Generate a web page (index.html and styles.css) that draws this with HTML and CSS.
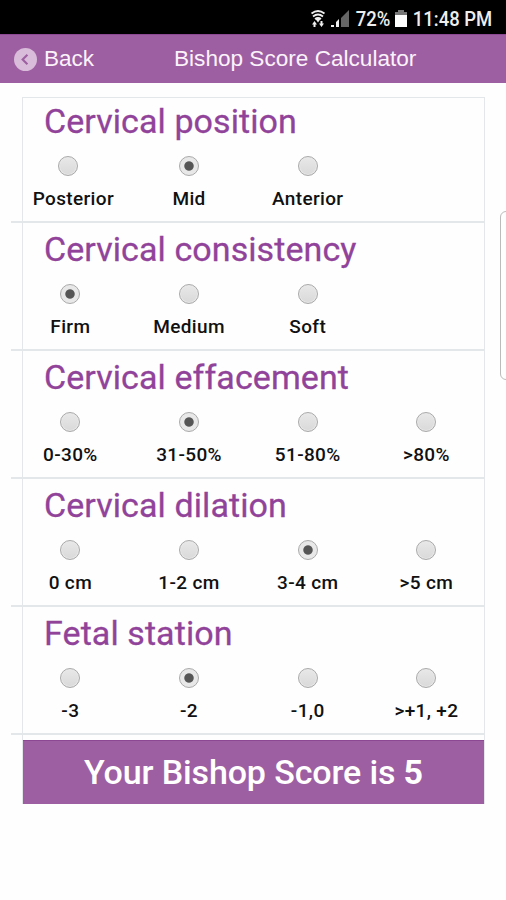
FILE: index.html
```html
<!DOCTYPE html>
<html lang="en">
<head>
    <meta charset="UTF-8">
    <meta name="viewport" content="width=device-width, initial-scale=1.0">
    <title>Bishop Score Calculator</title>
    <link rel="stylesheet" href="styles.css">
</head>
<body>
    <div class="status-bar">
        <svg class="wifi" viewBox="0 0 16 18" width="16" height="18">
            <path d="M1.500 3.500Q8 -1.500 14.500 3.500M3 6.500Q8 2.500 13 6.500M5 9Q8 7 11 9" fill="none" stroke="#eee" stroke-width="1.800"/>
            <path d="M5.500 9h5L8 12.500zM2 14.500l2.500-3.500 2.500 3.500H5.500V17h-2v-2.500zM9 13.500h1.500V11h2v2.500H14L11.500 17z" fill="#eee"/>
        </svg>
        <svg class="signal" viewBox="0 0 19 18" width="19" height="18">
            <path d="M18 0v17h-8V8z" fill="#666"/>
            <path d="M8 9v8H5v-5zM0 15h3v2H0z" fill="#eee"/>
        </svg>
        <span class="battery-level">72%</span>
        <svg class="battery" viewBox="0 0 12 17" width="12" height="17">
            <path d="M3 0h6v2h3v4H0V2h3z" fill="#777"/>
            <path d="M0 5h12v12H0z" fill="#fff"/>
        </svg>
        <span class="clock">11:48 PM</span>
    </div>

    <header class="header">
        <a class="back" href="#">
            <svg viewBox="0 0 24 24" width="23" height="23">
                <circle cx="12" cy="12" r="12" fill="#d9bcda"/>
                <path d="M14 7l-5 5 5 5" fill="none" stroke="#9e5fa2" stroke-width="2.200"/>
            </svg>
            <span>Back</span>
        </a>
        <h1>Bishop Score Calculator</h1>
    </header>

    <main class="calculator">
        <section class="question">
            <h2>Cervical position</h2>
            <div class="options">
                <label class="option posterior"><input type="radio" name="position"><span>Posterior</span></label>
                <label class="option"><input type="radio" name="position" checked><span>Mid</span></label>
                <label class="option"><input type="radio" name="position"><span>Anterior</span></label>
            </div>
        </section>
        <section class="question">
            <h2>Cervical consistency</h2>
            <div class="options">
                <label class="option"><input type="radio" name="consistency" checked><span>Firm</span></label>
                <label class="option"><input type="radio" name="consistency"><span>Medium</span></label>
                <label class="option"><input type="radio" name="consistency"><span>Soft</span></label>
            </div>
        </section>
        <section class="question">
            <h2>Cervical effacement</h2>
            <div class="options">
                <label class="option"><input type="radio" name="effacement"><span>0-30%</span></label>
                <label class="option"><input type="radio" name="effacement" checked><span>31-50%</span></label>
                <label class="option"><input type="radio" name="effacement"><span>51-80%</span></label>
                <label class="option"><input type="radio" name="effacement"><span>&gt;80%</span></label>
            </div>
        </section>
        <section class="question">
            <h2>Cervical dilation</h2>
            <div class="options">
                <label class="option"><input type="radio" name="dilation"><span>0 cm</span></label>
                <label class="option"><input type="radio" name="dilation"><span>1-2 cm</span></label>
                <label class="option"><input type="radio" name="dilation" checked><span>3-4 cm</span></label>
                <label class="option"><input type="radio" name="dilation"><span>&gt;5 cm</span></label>
            </div>
        </section>
        <section class="question">
            <h2>Fetal station</h2>
            <div class="options">
                <label class="option"><input type="radio" name="station"><span>-3</span></label>
                <label class="option"><input type="radio" name="station" checked><span>-2</span></label>
                <label class="option"><input type="radio" name="station"><span>-1,0</span></label>
                <label class="option"><input type="radio" name="station"><span>&gt;+1, +2</span></label>
            </div>
        </section>
        <div class="score">Your Bishop Score is <b>5</b></div>
    </main>

    <div class="edge-handle"></div>
</body>
</html>
```
FILE: styles.css
```css
:root {
    --purple: #9e5fa2;
    --title: #91439a;
    --line: #e3e7ea;
}

* {
    margin: 0;
    padding: 0;
    box-sizing: border-box;
}

body {
    background: #fefefe;
    color: #111;
    font-family: Roboto, sans-serif;
    height: 900px;
    position: relative;
    overflow: hidden;
}

.status-bar {
    display: flex;
    align-items: center;
    justify-content: flex-end;
    height: 34px;
    padding: 3px 14px 0 0;
    background: #000;
    color: #eee;
    font-size: 20.5px;
    font-weight: 500;
    white-space: nowrap;
}

.signal {
    margin: 0 6px 0 5px;
}

.battery {
    margin: 0 6px 0 4px;
}

/* the system font is narrower than regular Roboto */
.battery-level,
.clock {
    transform: scaleX(0.9);
    transform-origin: right;
}

.battery-level {
    margin-left: -4px;
}

.clock {
    margin-left: -9px;
}

.header {
    display: grid;
    grid-template-columns: 160px 1fr;
    align-items: center;
    height: 49px;
    padding-left: 14px;
    background: var(--purple);
    border-top: 1px solid #8d4893;
    color: #fbf3fb;
    font-family: "Liberation Sans", Arial, sans-serif;
    font-size: 22.5px;
}

.header h1 {
    font-size: 22.6px;
    font-weight: normal;
}

.back {
    display: flex;
    align-items: center;
    gap: 7px;
    color: inherit;
    text-decoration: none;
}

.calculator {
    width: 463px;
    height: 707px;
    margin: 14px 0 0 22px;
    border: 1px solid var(--line);
    border-width: 1px 1px 0;
}

.question {
    height: 128px;
    margin-left: -12px;
    padding-top: 5px;
    border-bottom: 2px solid var(--line);
}

.question:first-child {
    height: 125px;
    padding-top: 2px;
}

.question h2 {
    height: 42px;
    margin-left: 33px;
    color: var(--title);
    font-size: 34px;
    font-weight: 400;
    line-height: 42px;
    letter-spacing: 0.08px;
    white-space: nowrap;
    -webkit-text-stroke: 0.3px var(--title);
}

.options {
    display: grid;
    grid-template-columns: repeat(4, 118.7px);
    margin-top: 14px;
}

.option {
    display: flex;
    flex-direction: column;
    align-items: center;
    gap: 11px;
    font-size: 19px;
    font-weight: 500;
    line-height: 24px;
    letter-spacing: 0.35px;
    white-space: nowrap;
}

.option input {
    appearance: none;
    width: 20px;
    height: 20px;
    border: 1.5px solid #aaa;
    border-radius: 50%;
    background: linear-gradient(#e8e8e8, #d9d9d9);
    box-shadow: inset 0 0 0 1px #e8e8e8;
}

.option input:checked {
    background: radial-gradient(circle, #555 0 4.2px, #e8e8e8 5.2px);
}

.posterior input {
    margin-right: 5px;
}

.posterior span {
    margin-left: 6px;
}

.score {
    height: 64px;
    margin-top: 5px;
    background: var(--purple);
    border-top: 1px solid #8d4893;
    color: #fff;
    font-size: 34px;
    font-weight: 500;
    line-height: 63px;
    letter-spacing: -0.13px;
    text-align: center;
    white-space: nowrap;
}

.score b {
    font-weight: 700;
}

/* edge panel tab peeking in from the right */
.edge-handle {
    position: absolute;
    top: 211px;
    right: -10px;
    width: 16px;
    height: 169px;
    border: 1px solid #bbb;
    border-radius: 6px;
    background: #fefefe;
}
```
